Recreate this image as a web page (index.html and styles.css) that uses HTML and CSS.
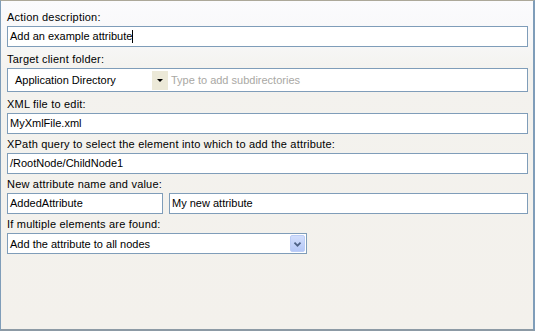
FILE: index.html
```html
<!DOCTYPE html>
<html lang="en">
<head>
   <meta charset="UTF-8">
   <title>Add XML attribute action</title>
   <link rel="stylesheet" href="styles.css">
</head>
<body>
   <div class="panel">
       <div class="field field-wide">
           <div class="label">Action description:</div>
           <div class="textbox">Add an example attribute<span class="caret"></span></div>
       </div>
       <div class="field field-wide">
           <div class="label">Target client folder:</div>
           <div class="combo">
               <span class="combo-value">Application Directory</span>
               <span class="combo-button"><span class="tri"></span></span>
               <span class="placeholder">Type to add subdirectories</span>
           </div>
       </div>
       <div class="field">
           <div class="label">XML file to edit:</div>
           <div class="textbox">MyXmlFile.xml</div>
       </div>
       <div class="field">
           <div class="label">XPath query to select the element into which to add the attribute:</div>
           <div class="textbox">/RootNode/ChildNode1</div>
       </div>
       <div class="field">
           <div class="label">New attribute name and value:</div>
           <div class="pair">
               <div class="textbox name-box">AddedAttribute</div>
               <div class="textbox value-box">My new attribute</div>
           </div>
       </div>
       <div class="field">
           <div class="label">If multiple elements are found:</div>
           <div class="select">
               <span class="select-value">Add the attribute to all nodes</span>
               <span class="select-button">
                   <svg width="15" height="16" viewBox="0 0 15 16">
                       <path d="M4 6.5 L7.5 10 L11 6.5" fill="none" stroke="#4d6185" stroke-width="2"/>
                   </svg>
               </span>
           </div>
       </div>
   </div>
</body>
</html>
```

FILE: styles.css
```css
body {
    margin: 0;
    font-family: "Liberation Sans", Arial, sans-serif;
    font-size: 11px;
    color: #000;
}
.panel {
    width: 535px;
    height: 331px;
    box-sizing: border-box;
    border: 1px solid #7f9db9;
    border-top-color: #aca899;
    border-right-width: 2px;
    border-bottom: 2px solid #8c9aa5;
    padding: 10px 5px 0 6px;
    background: linear-gradient(#fbfbfd 0, #f8f8f9 35px, #f3f2ee 70px, #f3f1ec 100%);
}
.field {
    margin-bottom: 4px;
}
.field-wide {
    margin-bottom: 6px;
}
.label {
    line-height: 13px;
    height: 13px;
    margin-bottom: 2px;
    white-space: nowrap;
    letter-spacing: 0.2px;
}
.textbox {
    height: 21px;
    box-sizing: border-box;
    border: 1px solid #7f9db9;
    background: #fff;
    padding: 0 2px;
    line-height: 19px;
    white-space: nowrap;
}
.caret {
    display: inline-block;
    width: 1px;
    height: 13px;
    background: #000;
    vertical-align: -3px;
}
.combo {
    height: 24px;
    box-sizing: border-box;
    border: 1px solid #7f9db9;
    background: #fff;
    display: flex;
    align-items: center;
    padding-left: 7px;
}
.combo-value {
    width: 137px;
}
.combo-button {
    width: 16px;
    height: 19px;
    background: #ece9d8;
    display: flex;
    justify-content: center;
    align-items: center;
}
.tri {
    width: 0;
    height: 0;
    border-left: 3px solid transparent;
    border-right: 3px solid transparent;
    border-top: 3px solid #000;
}
.placeholder {
    color: #a9a8a4;
    margin-left: 3px;
}
.pair {
    display: flex;
    gap: 6px;
}
.name-box {
    width: 156px;
}
.value-box {
    flex: 1;
}
.select {
    width: 300px;
    height: 21px;
    box-sizing: border-box;
    border: 1px solid #7f9db9;
    background: #fff;
    display: flex;
    align-items: center;
    justify-content: space-between;
    padding: 0 0 0 2px;
}
.select-button {
    width: 15px;
    height: 17px;
    margin-right: 1px;
    box-sizing: border-box;
    border: 1px solid #bccdf6;
    border-radius: 2px;
    background: linear-gradient(#d2defc, #b5c8f7);
    display: flex;
    align-items: center;
    justify-content: center;
}
.select-button svg {
    display: block;
}
```
